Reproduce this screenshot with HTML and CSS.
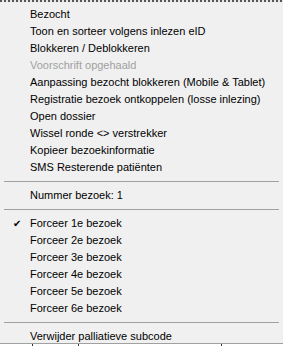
FILE: index.html
```html
<!DOCTYPE html>
<html lang="nl">
<head>
  <meta charset="UTF-8">
  <title>Contextmenu</title>
  <link rel="stylesheet" href="styles.css">
</head>
<body>
  <div class="top-edge"></div>
  <div class="menu">
    <div class="item">Bezocht</div>
    <div class="item">Toon en sorteer volgens inlezen eID</div>
    <div class="item">Blokkeren / Deblokkeren</div>
    <div class="item disabled">Voorschrift opgehaald</div>
    <div class="item">Aanpassing bezocht blokkeren (Mobile &amp; Tablet)</div>
    <div class="item">Registratie bezoek ontkoppelen (losse inlezing)</div>
    <div class="item">Open dossier</div>
    <div class="item">Wissel ronde &lt;&gt; verstrekker</div>
    <div class="item">Kopieer bezoekinformatie</div>
    <div class="item">SMS Resterende patiënten</div>
    <div class="sep"></div>
    <div class="item">Nummer bezoek: 1</div>
    <div class="sep"></div>
    <div class="item checked"><span class="check">✔</span>Forceer 1e bezoek</div>
    <div class="item">Forceer 2e bezoek</div>
    <div class="item">Forceer 3e bezoek</div>
    <div class="item">Forceer 4e bezoek</div>
    <div class="item">Forceer 5e bezoek</div>
    <div class="item">Forceer 6e bezoek</div>
    <div class="sep"></div>
    <div class="item">Verwijder palliatieve subcode</div>
  </div>
  <div class="bottom-edge">
    <span class="tick t1"></span>
    <span class="tick t2"></span>
    <span class="tick t3"></span>
  </div>
</body>
</html>
```

FILE: styles.css
```css
body {
  margin: 0;
  background-color: #f0f0f0;
  font-family: "Liberation Sans", Arial, sans-serif;
  font-size: 11px;
  color: #000;
  width: 283px;
  height: 346px;
  overflow: hidden;
  position: relative;
}

.top-edge {
  height: 2px;
  background-image: repeating-linear-gradient(90deg, #555 0 2px, #e8e8e8 2px 4px);
}

.menu {
  padding-top: 4px;
}

.item {
  height: 17px;
  line-height: 17px;
  padding-left: 30px;
  white-space: nowrap;
  position: relative;
}

.disabled {
  color: #a0a0a0;
}

.check {
  position: absolute;
  left: 13px;
  top: 0;
  font-size: 10px;
}

.sep {
  height: 1px;
  margin: 5px 4px 5px 4px;
  background-color: #a0a0a0;
}

.bottom-edge {
  position: absolute;
  left: 0;
  right: 0;
  bottom: 0;
  height: 2px;
  border-top: 1px solid #a0a0a0;
  background-color: #fff;
}

.tick {
  position: absolute;
  top: 0;
  width: 1px;
  height: 2px;
  background-color: #333;
}

.t1 { left: 32px; }
.t2 { left: 78px; }
.t3 { left: 221px; }
```
